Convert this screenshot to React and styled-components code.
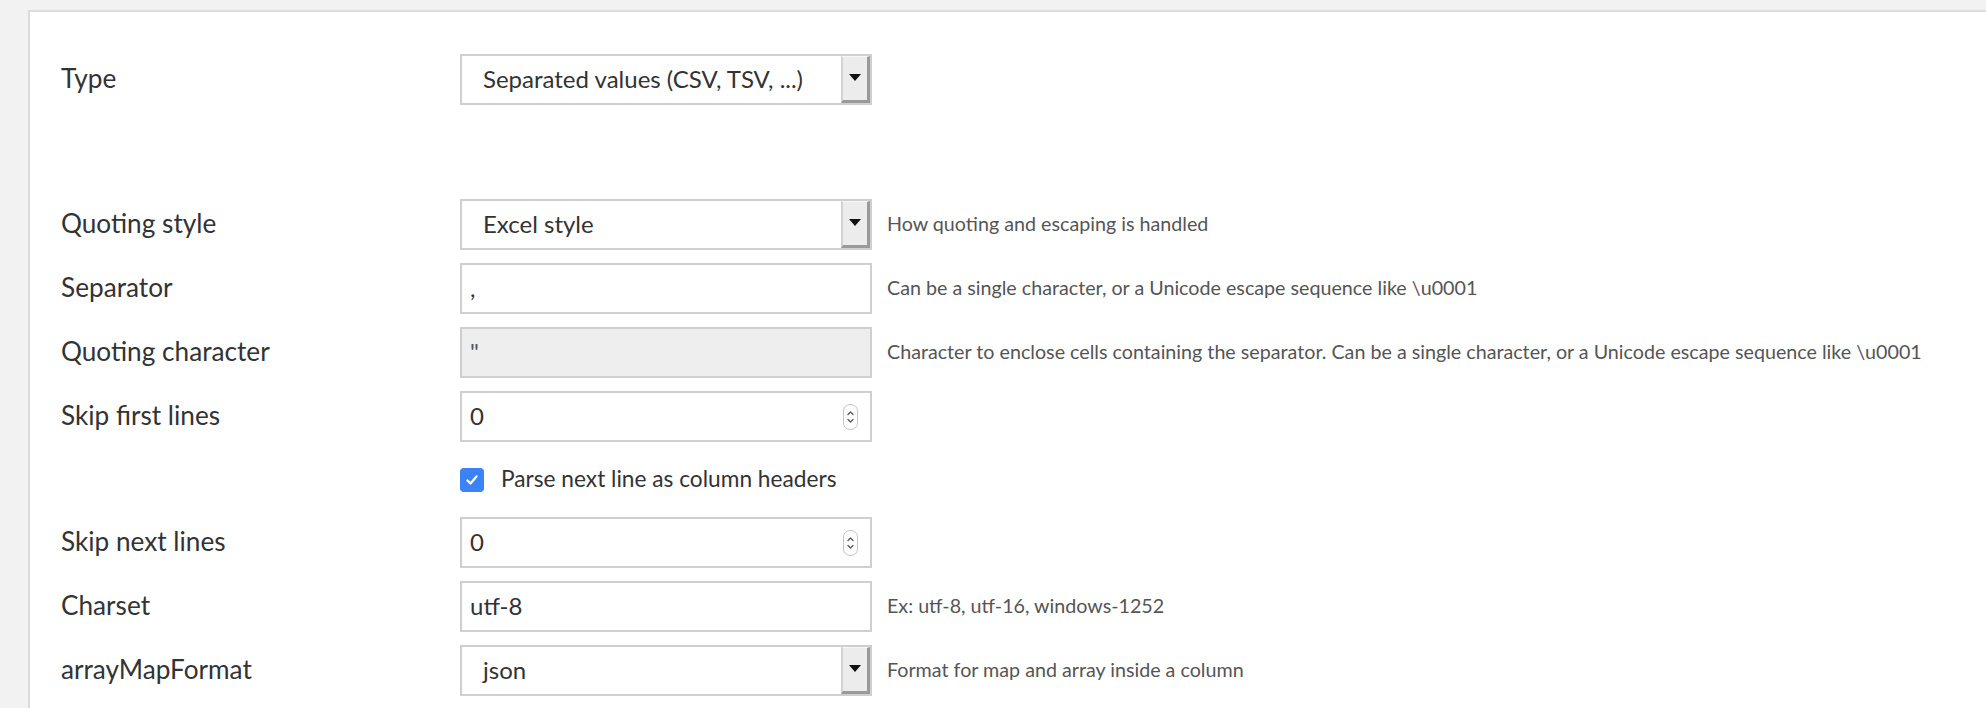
import React from "react";
import styled, { createGlobalStyle } from "styled-components";

const GlobalStyle = createGlobalStyle`
  html, body {
    margin: 0;
    padding: 0;
    background: #f2f2f2;
    font-family: Lato, "Open Sans", sans-serif;
    color: #333;
  }
`;

const Page = styled.div`
  padding: 10px 0 0 28px;
  height: 698px;
  overflow: hidden;
`;

const Panel = styled.div`
  background: #fff;
  border-top: 2px solid #dcdcdc;
  border-left: 2px solid #dcdcdc;
  height: 100%;
  padding: 42px 0 0 31px;
  box-sizing: border-box;
`;

const Row = styled.div`
  display: grid;
  grid-template-columns: 399px 412px 1fr;
  align-items: center;
  height: 51px;
  margin-bottom: ${({ $gap }) => ($gap != null ? $gap : 13)}px;
`;

const Label = styled.div`
  font-size: 26.2px;
  color: #333;
  padding-bottom: 4px;
  white-space: nowrap;
`;

const Help = styled.div`
  font-size: 19.7px;
  color: #555;
  padding-left: 15px;
  padding-bottom: 2px;
  white-space: nowrap;
`;

const Box = styled.div`
  box-sizing: border-box;
  height: 51px;
  border: 2px solid #cfcfcf;
  background: ${({ $disabled }) => ($disabled ? "#eeeeee" : "#fff")};
  display: flex;
  align-items: center;
  font-size: 24px;
  color: ${({ $disabled }) => ($disabled ? "#555" : "#333")};
`;

const Value = styled.span`
  flex: 1;
  padding-left: ${({ $select }) => ($select ? 21 : 8)}px;
  padding-bottom: 2px;
  white-space: nowrap;
`;

const ArrowButton = styled.div`
  box-sizing: border-box;
  width: 29px;
  align-self: stretch;
  background: #ececec;
  border-top: 1px solid #f6f6f6;
  border-left: 2px solid #d4d4d4;
  border-right: 3px solid #9a9a9a;
  border-bottom: 3px solid #9a9a9a;
  display: flex;
  align-items: center;
  justify-content: center;
`;

const Arrow = styled.span`
  width: 0;
  height: 0;
  border-left: 6px solid transparent;
  border-right: 6px solid transparent;
  border-top: 7px solid #111;
  margin-top: -3px;
`;

const Spinner = styled.div`
  box-sizing: border-box;
  width: 15px;
  height: 26px;
  border: 1px solid #c4c4c4;
  border-radius: 7px;
  margin-right: 12px;
  display: flex;
  align-items: center;
  justify-content: center;
`;

const CheckRow = styled.label`
  display: grid;
  grid-template-columns: 399px auto;
  align-items: center;
  padding-top: 10px;
  margin-bottom: 28px;
  height: 24px;
`;

const CheckWrap = styled.div`
  display: flex;
  align-items: center;
  gap: 17px;
  font-size: 22.7px;
  color: #333;
`;

const CheckText = styled.span`
  padding-bottom: 3px;
`;

const CheckBox = styled.span`
  width: 24px;
  height: 24px;
  border-radius: 4px;
  background: #3b82f6;
  display: flex;
  align-items: center;
  justify-content: center;
`;

const Spacer = styled.div`
  height: 94px;
`;

const Select = ({ value }) => (
  <Box>
    <Value $select>{value}</Value>
    <ArrowButton>
      <Arrow />
    </ArrowButton>
  </Box>
);

const NumberInput = ({ value }) => (
  <Box>
    <Value>{value}</Value>
    <Spinner>
      <svg width="9" height="18" viewBox="0 0 9 18" fill="none" stroke="#555" strokeWidth="1.3" strokeLinecap="round" strokeLinejoin="round">
        <path d="M2 6.5 L4.5 4 L7 6.5" />
        <path d="M2 11.5 L4.5 14 L7 11.5" />
      </svg>
    </Spinner>
  </Box>
);

const TextInput = ({ value, disabled }) => (
  <Box $disabled={disabled}>
    <Value>{value}</Value>
  </Box>
);

export default function App() {
  return (
    <>
      <GlobalStyle />
      <Page>
        <Panel>
          <Row $gap={0}>
            <Label>Type</Label>
            <Select value="Separated values (CSV, TSV, ...)" />
          </Row>
          <Spacer />
          <Row>
            <Label>Quoting style</Label>
            <Select value="Excel style" />
            <Help>How quoting and escaping is handled</Help>
          </Row>
          <Row>
            <Label>Separator</Label>
            <TextInput value="," />
            <Help>Can be a single character, or a Unicode escape sequence like \u0001</Help>
          </Row>
          <Row>
            <Label>Quoting character</Label>
            <TextInput value={'"'} disabled />
            <Help>
              Character to enclose cells containing the separator. Can be a single character, or a Unicode escape sequence like \u0001
            </Help>
          </Row>
          <Row>
            <Label>Skip first lines</Label>
            <NumberInput value="0" />
          </Row>
          <CheckRow>
            <span />
            <CheckWrap>
              <CheckBox>
                <svg width="16" height="16" viewBox="0 0 16 16" fill="none" stroke="#fff" strokeWidth="2.4" strokeLinecap="round" strokeLinejoin="round">
                  <path d="M3.5 8.5 L6.5 11.5 L12.5 4.5" />
                </svg>
              </CheckBox>
              <CheckText>Parse next line as column headers</CheckText>
            </CheckWrap>
          </CheckRow>
          <Row>
            <Label>Skip next lines</Label>
            <NumberInput value="0" />
          </Row>
          <Row>
            <Label>Charset</Label>
            <TextInput value="utf-8" />
            <Help>Ex: utf-8, utf-16, windows-1252</Help>
          </Row>
          <Row>
            <Label>arrayMapFormat</Label>
            <Select value="json" />
            <Help>Format for map and array inside a column</Help>
          </Row>
        </Panel>
      </Page>
    </>
  );
}
